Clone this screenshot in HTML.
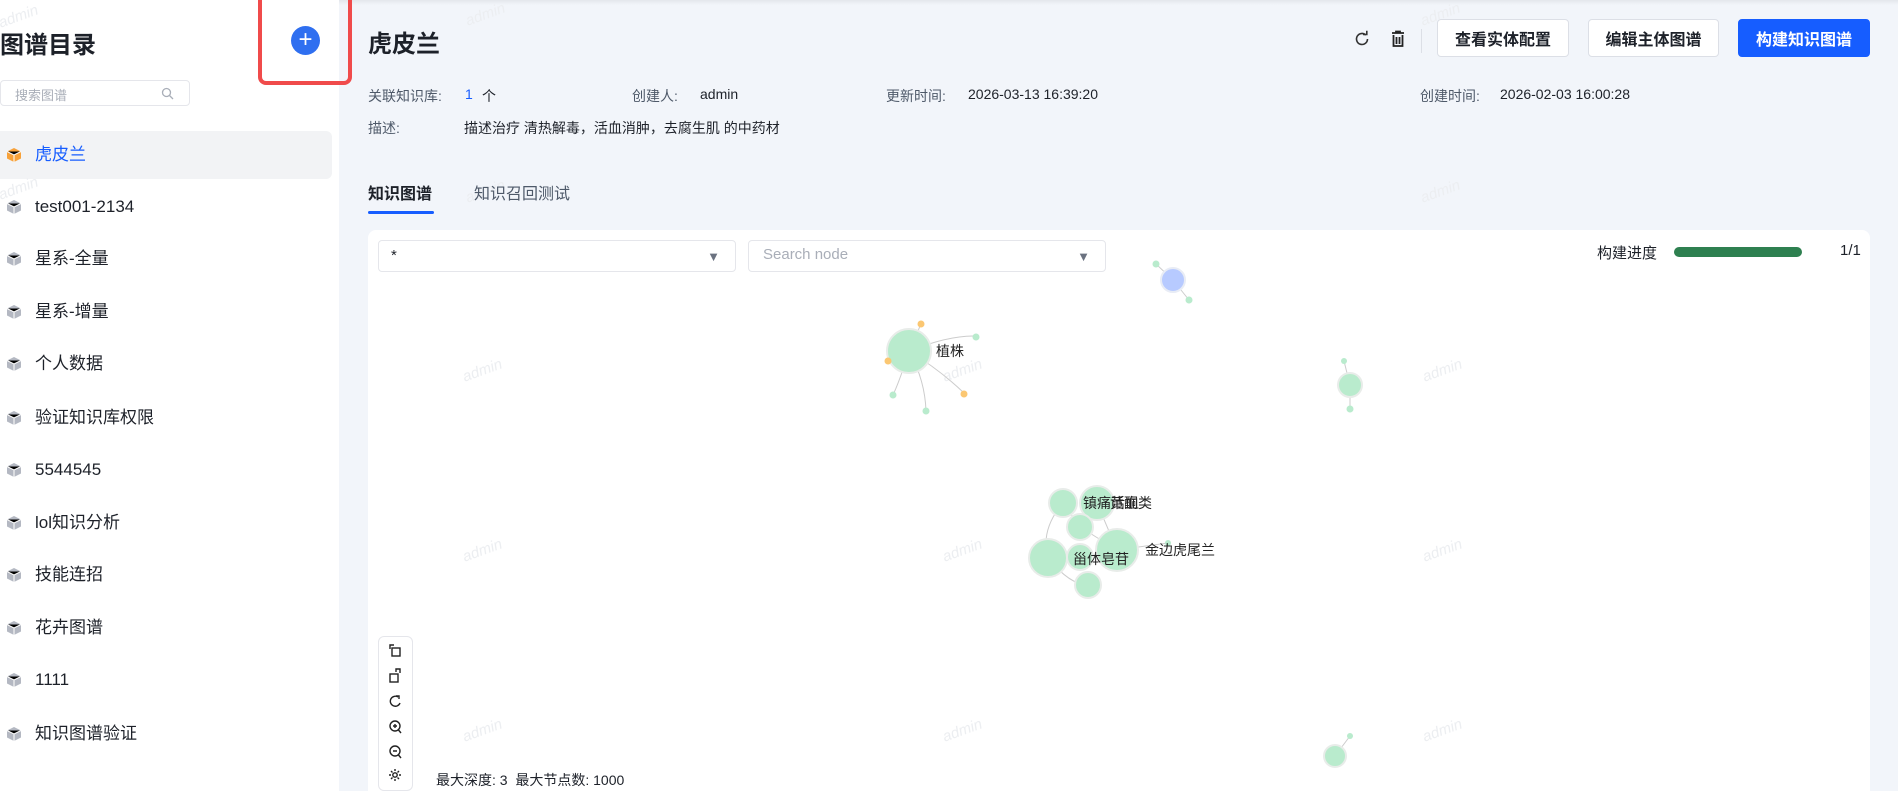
<!DOCTYPE html>
<html><head><meta charset="utf-8"><style>
*{margin:0;padding:0;box-sizing:border-box}
html{overflow:hidden;width:1898px;height:791px}
body{width:1898px;height:791px;overflow:hidden;background:#f2f5fa;font-family:"Liberation Sans","Noto Sans CJK SC",sans-serif;color:#1d2129;position:relative}
.abs{position:absolute}
#side{left:0;top:0;width:339px;height:791px;background:#fff}
.item{position:absolute;left:0;width:332px;height:48px;font-size:17px;line-height:48px;padding-left:35px}
.item svg{position:absolute;left:6px;top:16px}
.btn{position:absolute;top:19px;height:38px;border:1px solid #dcdfe6;border-radius:4px;background:#fff;font-size:16px;font-weight:bold;display:flex;align-items:center;justify-content:center}
.info{position:absolute;font-size:14px;color:#4e5969}
.val{position:absolute;font-size:14px;color:#1d2129}
.wm{position:absolute;font-size:15px;color:#eceef1;transform:rotate(-20deg);font-style:italic}
.sel{position:absolute;top:240px;height:32px;border:1px solid #e5e6eb;border-radius:4px;background:#fff;font-size:15px}
.arr{position:absolute;right:15px;top:8px;color:#6b7280;font-size:13px}
</style></head><body>
<div class="abs" style="left:0;top:0;width:1898px;height:5px;background:linear-gradient(#e4e7ec,#f2f5fa00)"></div>
<div id="side" class="abs">
 <div class="abs" style="left:0;top:25px;font-size:24px;font-weight:bold;">图谱目录</div>
 <div class="abs" style="left:258px;top:0;width:94px;height:85px;border:4px solid #f04b4b;border-top:none;border-radius:0 0 8px 8px"></div>
 <div class="abs" style="left:291px;top:26px;width:29px;height:29px;border-radius:50%;background:#2f6ff0;color:#fff;font-size:24px;line-height:27px;text-align:center">+</div>
 <div class="abs" style="left:0;top:80px;width:190px;height:26px;border:1px solid #e5e6eb;border-radius:4px;font-size:13px;color:#a9aeb8;padding:4px 14px">搜索图谱
  <svg class="abs" style="left:160px;top:6px" width="13" height="13" viewBox="0 0 13 13"><circle cx="5.5" cy="5.5" r="4" fill="none" stroke="#a9aeb8" stroke-width="1.3"/><path d="M8.5 8.5L12 12" stroke="#a9aeb8" stroke-width="1.3"/></svg></div>
 <div class="item" style="top:131px;background:#f2f3f5;border-radius:0 6px 6px 0;color:#165dff">
  <svg width="16" height="16" viewBox="0 0 16 16"><path d="M8 1L15 4.5V11.5L8 15L1 11.5V4.5Z" fill="#f7a13a"/><path d="M1 4.5L8 8L15 4.5M8 8V15" stroke="#fff" stroke-width="1"/></svg>虎皮兰</div>
 <div class="item" style="top:183px"><svg width="16" height="16" viewBox="0 0 16 16"><path d="M8 1L15 4.5V11.5L8 15L1 11.5V4.5Z" fill="#b4b8c2"/><path d="M1 4.5L8 8L15 4.5M8 8V15" stroke="#fff"/></svg>test001-2134</div>
 <div class="item" style="top:235px"><svg width="16" height="16" viewBox="0 0 16 16"><path d="M8 1L15 4.5V11.5L8 15L1 11.5V4.5Z" fill="#b4b8c2"/><path d="M1 4.5L8 8L15 4.5M8 8V15" stroke="#fff"/></svg>星系-全量</div>
 <div class="item" style="top:288px"><svg width="16" height="16" viewBox="0 0 16 16"><path d="M8 1L15 4.5V11.5L8 15L1 11.5V4.5Z" fill="#b4b8c2"/><path d="M1 4.5L8 8L15 4.5M8 8V15" stroke="#fff"/></svg>星系-增量</div>
 <div class="item" style="top:340px"><svg width="16" height="16" viewBox="0 0 16 16"><path d="M8 1L15 4.5V11.5L8 15L1 11.5V4.5Z" fill="#b4b8c2"/><path d="M1 4.5L8 8L15 4.5M8 8V15" stroke="#fff"/></svg>个人数据</div>
 <div class="item" style="top:394px"><svg width="16" height="16" viewBox="0 0 16 16"><path d="M8 1L15 4.5V11.5L8 15L1 11.5V4.5Z" fill="#b4b8c2"/><path d="M1 4.5L8 8L15 4.5M8 8V15" stroke="#fff"/></svg>验证知识库权限</div>
 <div class="item" style="top:446px"><svg width="16" height="16" viewBox="0 0 16 16"><path d="M8 1L15 4.5V11.5L8 15L1 11.5V4.5Z" fill="#b4b8c2"/><path d="M1 4.5L8 8L15 4.5M8 8V15" stroke="#fff"/></svg>5544545</div>
 <div class="item" style="top:499px"><svg width="16" height="16" viewBox="0 0 16 16"><path d="M8 1L15 4.5V11.5L8 15L1 11.5V4.5Z" fill="#b4b8c2"/><path d="M1 4.5L8 8L15 4.5M8 8V15" stroke="#fff"/></svg>lol知识分析</div>
 <div class="item" style="top:551px"><svg width="16" height="16" viewBox="0 0 16 16"><path d="M8 1L15 4.5V11.5L8 15L1 11.5V4.5Z" fill="#b4b8c2"/><path d="M1 4.5L8 8L15 4.5M8 8V15" stroke="#fff"/></svg>技能连招</div>
 <div class="item" style="top:604px"><svg width="16" height="16" viewBox="0 0 16 16"><path d="M8 1L15 4.5V11.5L8 15L1 11.5V4.5Z" fill="#b4b8c2"/><path d="M1 4.5L8 8L15 4.5M8 8V15" stroke="#fff"/></svg>花卉图谱</div>
 <div class="item" style="top:656px"><svg width="16" height="16" viewBox="0 0 16 16"><path d="M8 1L15 4.5V11.5L8 15L1 11.5V4.5Z" fill="#b4b8c2"/><path d="M1 4.5L8 8L15 4.5M8 8V15" stroke="#fff"/></svg>1111</div>
 <div class="item" style="top:710px"><svg width="16" height="16" viewBox="0 0 16 16"><path d="M8 1L15 4.5V11.5L8 15L1 11.5V4.5Z" fill="#b4b8c2"/><path d="M1 4.5L8 8L15 4.5M8 8V15" stroke="#fff"/></svg>知识图谱验证</div>
</div>

<div class="abs" style="left:368px;top:24px;font-size:24px;font-weight:bold">虎皮兰</div>
<svg class="abs" style="left:1353px;top:30px" width="18" height="18" viewBox="0 0 18 18"><path d="M14.5 9A5.5 5.5 0 1 1 12.8 5" fill="none" stroke="#333" stroke-width="1.6"/><path d="M10 4.5H13.8V0.8" fill="none" stroke="#333" stroke-width="1.6"/></svg>
<svg class="abs" style="left:1390px;top:30px" width="16" height="18" viewBox="0 0 16 18"><path d="M2 3H14M6 3V1.5H10V3M3.5 5V16H12.5V5M6.5 7V14M9.5 7V14" fill="none" stroke="#222" stroke-width="1.8"/></svg>
<div class="abs" style="left:1421px;top:29px;width:1px;height:24px;background:#dcdfe6"></div>
<div class="btn" style="left:1437px;width:132px">查看实体配置</div>
<div class="btn" style="left:1588px;width:131px">编辑主体图谱</div>
<div class="btn" style="left:1738px;width:132px;background:#165dff;border-color:#165dff;color:#fff">构建知识图谱</div>

<div class="info" style="left:368px;top:86px">关联知识库:</div>
<div class="val" style="left:465px;top:86px;color:#165dff">1</div><div class="val" style="left:482px;top:86px">个</div>
<div class="info" style="left:632px;top:86px">创建人:</div><div class="val" style="left:700px;top:86px">admin</div>
<div class="info" style="left:886px;top:86px">更新时间:</div><div class="val" style="left:968px;top:86px">2026-03-13 16:39:20</div>
<div class="info" style="left:1420px;top:86px">创建时间:</div><div class="val" style="left:1500px;top:86px">2026-02-03 16:00:28</div>
<div class="info" style="left:368px;top:118px">描述:</div>
<div class="val" style="left:464px;top:118px">描述治疗 清热解毒，活血消肿，去腐生肌 的中药材</div>

<div class="wm" style="left:-2px;top:8px">admin</div><div class="wm" style="left:465px;top:6px">admin</div><div class="wm" style="left:1420px;top:6px">admin</div>
<div class="wm" style="left:-2px;top:180px">admin</div><div class="wm" style="left:465px;top:183px">admin</div><div class="wm" style="left:1420px;top:183px">admin</div>

<div class="abs" style="left:368px;top:180px;font-size:16px;font-weight:bold">知识图谱</div>
<div class="abs" style="left:474px;top:180px;font-size:16px;color:#4e5969">知识召回测试</div>
<div class="abs" style="left:368px;top:211px;width:66px;height:3px;background:#165dff;border-radius:2px"></div>

<div class="abs" style="left:368px;top:230px;width:1502px;height:561px;background:#fff;border-radius:8px 8px 0 0"></div>
<div class="sel" style="left:378px;width:358px;padding:6px 12px">*<span class="arr">▼</span></div>
<div class="sel" style="left:748px;width:358px;padding:5px 14px;color:#a9aeb8">Search node<span class="arr">▼</span></div>
<div class="abs" style="left:1597px;top:242px;font-size:15px">构建进度</div>
<div class="abs" style="left:1674px;top:247px;width:128px;height:10px;background:#2e8050;border-radius:5px"></div>
<div class="abs" style="left:1840px;top:242px;font-size:15px">1/1</div>

<div class="wm" style="left:462px;top:362px">admin</div><div class="wm" style="left:942px;top:362px">admin</div><div class="wm" style="left:1422px;top:362px">admin</div>
<div class="wm" style="left:462px;top:542px">admin</div><div class="wm" style="left:942px;top:542px">admin</div><div class="wm" style="left:1422px;top:542px">admin</div>
<div class="wm" style="left:462px;top:722px">admin</div><div class="wm" style="left:942px;top:722px">admin</div><div class="wm" style="left:1422px;top:722px">admin</div>

<svg class="abs" style="left:0;top:0" width="1898" height="791" viewBox="0 0 1898 791">
<g fill="none" stroke="#ccc" stroke-width="1">
<path d="M909 351Q950 335 976 336"/><path d="M909 351Q940 370 964 393"/><path d="M909 351Q925 380 926 411"/><path d="M909 351Q900 380 893 395"/><path d="M909 351L921 324"/>
<path d="M1173 280L1156 264M1173 280L1189 300M1350 385L1344 361M1350 385L1350 409"/>
<path d="M1063 503Q1040 530 1048 558M1048 558Q1070 585 1088 585M1080 527L1117 550M1097 503L1117 550M1080 557L1117 550M1117 550L1168 543M1063 503L1080 527"/>
<path d="M1335 756L1350 736"/>
</g>
<g fill="#b9ebcd" stroke="#e8ece9" stroke-width="2">
<circle cx="909" cy="351" r="22"/>
<circle cx="1063" cy="503" r="14"/><circle cx="1097" cy="503" r="17"/><circle cx="1080" cy="527" r="13"/>
<circle cx="1117" cy="550" r="21"/><circle cx="1048" cy="558" r="19"/><circle cx="1080" cy="557" r="13"/><circle cx="1088" cy="585" r="13"/>
<circle cx="1350" cy="385" r="12"/><circle cx="1335" cy="756" r="11"/>
</g>
<circle cx="1173" cy="280" r="12" fill="#b7caff" stroke="#e8ecf5" stroke-width="2"/>
<g fill="#b9ebcd"><circle cx="976" cy="337" r="3.5"/><circle cx="893" cy="395" r="3.5"/><circle cx="926" cy="411" r="3.5"/><circle cx="1156" cy="264" r="3.5"/><circle cx="1189" cy="300" r="3.5"/><circle cx="1344" cy="361" r="3"/><circle cx="1350" cy="409" r="3.5"/><circle cx="1168" cy="543" r="3"/><circle cx="1350" cy="736" r="3"/></g>
<g fill="#fbc772"><circle cx="921" cy="324" r="3.5"/><circle cx="964" cy="394" r="3.5"/><circle cx="888" cy="361" r="3.5"/></g>
<g font-size="14" fill="#222" font-family="Liberation Sans,Noto Sans CJK SC,sans-serif">
<text x="936" y="356">植株</text><text x="1083" y="508">镇痛活血</text><text x="1110" y="508">黄酮类</text>
<text x="1073" y="564">甾体皂苷</text><text x="1145" y="555">金边虎尾兰</text>
</g>
</svg>

<div class="abs" style="left:378px;top:636px;width:35px;height:155px;border:1px solid #e5e6eb;border-radius:6px;background:#fff"></div>
<svg class="abs" style="left:387px;top:643px" width="18" height="145" viewBox="0 0 18 145" fill="none" stroke="#222" stroke-width="1.4">
<rect x="5" y="5" width="8" height="8"/><path d="M3 6V2H7"/>
<rect x="3" y="31" width="8" height="8"/><path d="M9 29V26H13V30"/>
<path d="M13 60A5 5 0 1 1 11 54M9 53H12V56"/>
<circle cx="8" cy="83" r="5"/><path d="M11.5 87L14 90M6 83H10M8 81V85"/>
<circle cx="8" cy="108" r="5"/><path d="M11.5 112L14 115M6 108H10"/>
<circle cx="8" cy="132" r="2.2"/><path d="M8 126V128M8 136V138M2 132H4M12 132H14M4 128L5.5 129.5M12 128L10.5 129.5M4 136L5.5 134.5M12 136L10.5 134.5"/>
</svg>
<div class="abs" style="left:436px;top:770px;font-size:14px">最大深度: 3 &nbsp;最大节点数: 1000</div>
</body></html>
